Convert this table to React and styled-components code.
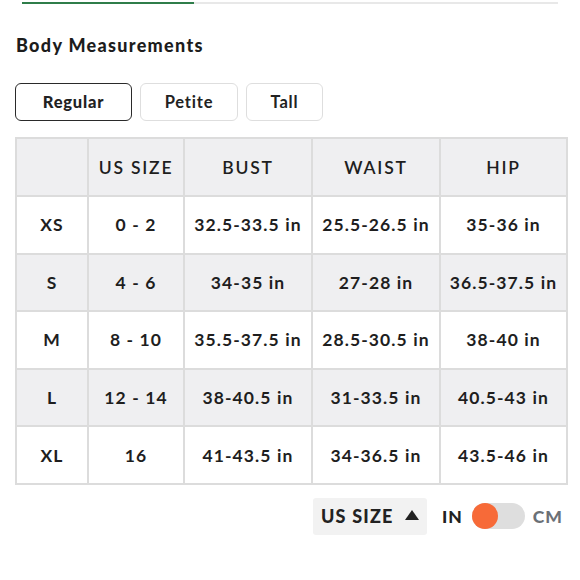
import React, { useState } from "react";
import styled, { createGlobalStyle } from "styled-components";

const Global = createGlobalStyle`
  html, body { margin: 0; padding: 0; background: #fff; }
  body { font-family: Lato, "Noto Sans", sans-serif; color: #1c1c1c; }
`;

const Page = styled.div`
  width: 580px;
  padding: 2px 14px 0 15px;
  box-sizing: border-box;
`;

const TabLine = styled.div`
  display: flex;
  margin: 0 8px 0 7px;
  height: 2px;
  background: #e8e8e8;
`;

const TabActive = styled.div`
  width: 172px;
  height: 2px;
  background: #2f7d4a;
`;

const Heading = styled.h2`
  margin: 31px 0 0 1px;
  font-size: 18px;
  font-weight: 900;
  letter-spacing: 1.3px;
  line-height: 20px;
`;

const FitRow = styled.div`
  display: flex;
  gap: 8px;
  margin-top: 28px;
`;

const FitButton = styled.button`
  height: 38px;
  width: ${(p) => p.$w}px;
  box-sizing: border-box;
  border-radius: 6px;
  background: #fff;
  border: ${(p) => (p.$active ? "1.5px solid #2a2a2a" : "1.5px solid #dedede")};
  font-family: inherit;
  font-size: 16.5px;
  font-weight: ${(p) => (p.$active ? 900 : 700)};
  letter-spacing: 0.8px;
  color: #222;
  cursor: pointer;
  padding: 0;
`;

const Table = styled.table`
  margin-top: 16px;
  width: 551px;
  border-collapse: collapse;
  table-layout: fixed;
  border: 2px solid #9c9c9c;
  font-size: 17.5px;
  font-weight: 700;
  letter-spacing: 1.1px;
`;

const Row = styled.tr`
  background: ${(p) => (p.$shade ? "#efeff1" : "#fff")};
`;

const Cell = styled.td`
  border: 2px solid #dcdcdc;
  height: ${(p) => (p.$head ? 56 : 55.6)}px;
  text-align: center;
  padding: 0;
  white-space: nowrap;
  color: #1e1e1e;
  font-weight: ${(p) => (p.$head ? 600 : 700)};
  letter-spacing: ${(p) => (p.$head ? 1.8 : 1.1)}px;
`;

const Toolbar = styled.div`
  display: flex;
  justify-content: flex-end;
  align-items: center;
  margin-top: 13px;
  padding-right: 3px;
`;

const SortButton = styled.button`
  display: flex;
  align-items: center;
  gap: 11px;
  height: 37px;
  width: 114px;
  box-sizing: border-box;
  padding: 0 0 0 8px;
  border: none;
  border-radius: 3px;
  background: #f2f2f2;
  font-family: inherit;
  font-size: 18px;
  font-weight: 900;
  letter-spacing: 1.2px;
  color: #222;
`;

const Triangle = styled.span`
  width: 0;
  height: 0;
  border-left: 7px solid transparent;
  border-right: 7px solid transparent;
  border-bottom: 10px solid #222;
  margin-top: -2px;
`;

const UnitLabel = styled.span`
  font-size: 17.5px;
  font-weight: 900;
  letter-spacing: 1px;
  color: ${(p) => (p.$on ? "#222" : "#6b7076")};
  margin: ${(p) => p.$m};
`;

const Track = styled.div`
  position: relative;
  width: 53px;
  height: 26px;
  border-radius: 13px;
  background: #dedede;
`;

const Knob = styled.div`
  position: absolute;
  top: 0;
  left: ${(p) => (p.$right ? 27 : 0)}px;
  width: 26px;
  height: 26px;
  border-radius: 50%;
  background: #f76a38;
`;

const cols = [72, 96, 128, 128, 127];
const header = ["", "US SIZE", "BUST", "WAIST", "HIP"];
const rows = [
  ["XS", "0 - 2", "32.5-33.5 in", "25.5-26.5 in", "35-36 in"],
  ["S", "4 - 6", "34-35 in", "27-28 in", "36.5-37.5 in"],
  ["M", "8 - 10", "35.5-37.5 in", "28.5-30.5 in", "38-40 in"],
  ["L", "12 - 14", "38-40.5 in", "31-33.5 in", "40.5-43 in"],
  ["XL", "16", "41-43.5 in", "34-36.5 in", "43.5-46 in"],
];

export default function App() {
  const [fit, setFit] = useState("Regular");
  const [cm, setCm] = useState(false);
  const fits = [
    ["Regular", 117],
    ["Petite", 98],
    ["Tall", 77],
  ];
  return (
    <Page>
      <Global />
      <TabLine>
        <TabActive />
      </TabLine>
      <Heading>Body Measurements</Heading>
      <FitRow>
        {fits.map(([f, w]) => (
          <FitButton key={f} $w={w} $active={fit === f} onClick={() => setFit(f)}>
            {f}
          </FitButton>
        ))}
      </FitRow>
      <Table>
        <colgroup>
          {cols.map((w, i) => (
            <col key={i} style={{ width: w }} />
          ))}
        </colgroup>
        <thead>
          <Row $shade>
            {header.map((h, i) => (
              <Cell as="th" $head key={i}>
                {h}
              </Cell>
            ))}
          </Row>
        </thead>
        <tbody>
          {rows.map((r, i) => (
            <Row key={r[0]} $shade={i % 2 === 1}>
              {r.map((c, j) => (
                <Cell key={j}>{c}</Cell>
              ))}
            </Row>
          ))}
        </tbody>
      </Table>
      <Toolbar>
        <SortButton>
          US SIZE
          <Triangle />
        </SortButton>
        <UnitLabel $on={!cm} $m="0 9px 0 15px">IN</UnitLabel>
        <Track onClick={() => setCm(!cm)}>
          <Knob $right={cm} />
        </Track>
        <UnitLabel $on={cm} $m="0 0 0 8px">CM</UnitLabel>
      </Toolbar>
    </Page>
  );
}
